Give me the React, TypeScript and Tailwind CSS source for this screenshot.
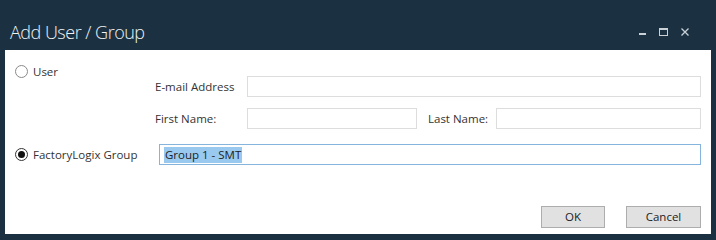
import React from "react";

function Radio({ checked, label }: { checked?: boolean; label: string }) {
  return (
    <div className="flex items-center gap-[5px]">
      <span
        className={`flex h-[13px] w-[13px] items-center justify-center rounded-full border bg-white ${
          checked ? "border-[#333333]" : "border-[#8a8a8a]"
        }`}
      >
        {checked && <span className="h-[7px] w-[7px] rounded-full bg-[#111111]" />}
      </span>
      <span className="text-[#333333]">{label}</span>
    </div>
  );
}

function Field({ className = "" }: { className?: string }) {
  return <div className={`h-[21px] border border-[#dddddd] bg-white ${className}`} />;
}

export default function App() {
  return (
    <div
      className="flex h-[240px] w-[716px] flex-col bg-[#1b3141] text-[11.5px]"
      style={{ fontFamily: '"Segoe UI", "Open Sans", sans-serif' }}
    >
      {/* title bar */}
      <div className="flex h-[50px] items-end justify-between pb-[9px] pl-[10px] pr-[27px]">
        <h1 className="text-[18px] font-light leading-none tracking-[-0.5px] text-[#eef3f6]">
          Add User / Group
        </h1>
        <div className="mb-[5px] flex items-center gap-[13px] text-[#c9d1d6]">
          <svg width="7" height="8" viewBox="0 0 7 8">
            <rect x="0" y="5" width="7" height="2" fill="currentColor" />
          </svg>
          <svg width="9" height="8" viewBox="0 0 9 8">
            <rect x="0.5" y="0.5" width="8" height="7" fill="none" stroke="currentColor" />
            <rect x="0" y="0" width="9" height="2" fill="currentColor" />
          </svg>
          <svg width="8" height="8" viewBox="0 0 8 8">
            <path d="M0.5 0.5 L7.5 7.5 M7.5 0.5 L0.5 7.5" stroke="currentColor" strokeWidth="1.3" />
          </svg>
        </div>
      </div>

      {/* body */}
      <div className="mx-[5px] mb-[6px] flex flex-1 flex-col bg-white pb-[6px] pl-[10px] pr-[10px]">
        <div className="flex">
          <div className="w-[140px] pt-[13px]">
            <Radio label="User" />
          </div>
          <div className="flex flex-1 flex-col pt-[26px]">
            <div className="flex h-[21px] items-center">
              <span className="w-[92px] text-[#333333]">E-mail Address</span>
              <Field className="flex-1" />
            </div>
            <div className="mt-[11px] flex h-[21px] items-center">
              <span className="w-[92px] text-[#333333]">First Name:</span>
              <Field className="w-[170px]" />
              <span className="ml-[11px] w-[68px] text-[#333333]">Last Name:</span>
              <Field className="flex-1" />
            </div>
          </div>
        </div>

        <div className="mt-[15px] flex h-[21px] items-center">
          <div className="w-[144px]">
            <Radio checked label="FactoryLogix Group" />
          </div>
          <div className="flex h-[21px] flex-1 items-center border border-[#85b5dd] bg-white pl-[4px]">
            <span className="bg-[#99c9ef] px-[1px] leading-[16px] text-[#222222]">Group 1 - SMT</span>
          </div>
        </div>

        <div className="mt-auto flex justify-end gap-[21px]">
          <button className="h-[22px] w-[64px] border border-[#adadad] bg-[#e1e1e1] text-[#222222]">
            OK
          </button>
          <button className="h-[22px] w-[75px] border border-[#adadad] bg-[#e1e1e1] text-[#222222]">
            Cancel
          </button>
        </div>
      </div>
    </div>
  );
}
